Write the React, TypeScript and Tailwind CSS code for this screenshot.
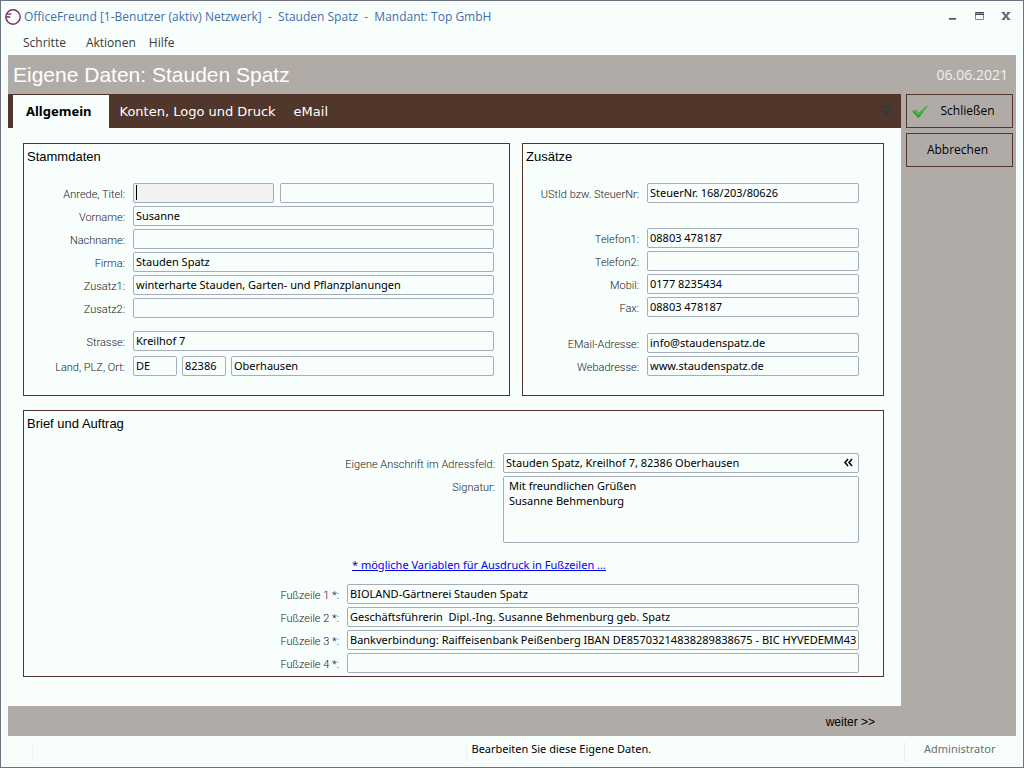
import React, { useId } from 'react';
import clsx from 'clsx';

const inputClass =
  'block h-5 min-w-0 rounded-[2px] border border-[#a6adb9] px-[2px] pb-[2px] text-[11px] leading-4 text-black outline-none';

interface TextInputProps {
  id?: string;
  label?: string;
  value?: string;
  className?: string;
}

function TextInput({ id, label, value = '', className = 'flex-1' }: TextInputProps) {
  return (
    <input
      id={id}
      type="text"
      aria-label={label}
      defaultValue={value}
      className={clsx(inputClass, className)}
    />
  );
}

interface RowProps {
  label: string;
  value?: string;
  labelClass: string;
  className?: string;
  children?: (id: string) => React.ReactNode;
}

function Row({ label, value, labelClass, className, children }: RowProps) {
  const id = useId();

  return (
    <div className={clsx('flex gap-2', className)}>
      <label
        htmlFor={id}
        className={clsx(
          'shrink-0 pt-1 text-right font-[Roboto,"Liberation_Sans",sans-serif] text-[11px] leading-4 font-light whitespace-nowrap text-[#202020]',
          labelClass,
        )}
      >
        {label}
      </label>
      {children ? children(id) : <TextInput id={id} value={value} />}
    </div>
  );
}

interface PanelProps {
  title: string;
  className?: string;
  children: React.ReactNode;
}

function Panel({ title, className, children }: PanelProps) {
  return (
    <section className={clsx('border border-[#51362b]', className)}>
      <h2 className="pt-[3px] pl-[3px] font-['Liberation_Sans',Arial,sans-serif] text-[13px] leading-5 text-black">
        {title}
      </h2>
      {children}
    </section>
  );
}

function TitleBar() {
  return (
    <header className="flex h-[31px] items-center justify-between pr-3 pl-1 font-['Open_Sans','Noto_Sans',sans-serif]">
      <div className="flex items-center gap-[3px]">
        <svg width="16" height="16" viewBox="0 0 16 16" fill="none" stroke="#7d2a6a">
          <circle cx="8" cy="8" r="7.2" strokeWidth="1.4" />
          <path d="M1 5.2h5.4M1 8h4.2M1.5 10.6h0.8" strokeWidth="1.3" />
        </svg>
        <h1 className="text-[12px] leading-4 whitespace-pre text-[#3f6fae]">
          {'OfficeFreund [1-Benutzer (aktiv) Netzwerk]  -  Stauden Spatz  -  Mandant: Top GmbH'}
        </h1>
      </div>
      <div className="flex gap-[17px]">
        <button type="button" aria-label="Minimieren">
          <svg width="10" height="10" viewBox="0 0 10 10">
            <path d="M2 6h7v1H2z" fill="#4a4d5c" />
            <path d="M2 7h7v1H2z" fill="#8a90a8" />
          </svg>
        </button>
        <button type="button" aria-label="Maximieren">
          <svg width="10" height="10" viewBox="0 0 10 10">
            <path d="M1.500 1.500h8v6h-8z" fill="none" stroke="#7d84a0" />
            <path d="M1 0h9v3H1z" fill="#8a90a8" />
            <path d="M1 0h9v1H1zM1 2h9v1H1z" fill="#4a4d5c" />
          </svg>
        </button>
        <button type="button" aria-label="Fenster schließen">
          <svg width="10" height="10" viewBox="0 0 10 10">
            <path d="M2 .5l6 7M8 .5l-6 7" stroke="#666b82" strokeWidth="2" />
            <path d="M.5 .5h3.500M6 .5h3.500M.5 7.500h3.500M6 7.500h3.500" stroke="#666b82" />
          </svg>
        </button>
      </div>
    </header>
  );
}

function Tabs() {
  return (
    <div
      role="tablist"
      className="flex h-[34px] items-stretch bg-[#51362b] pl-[5px] font-['DejaVu_Sans',Verdana,sans-serif] text-[13px] text-white"
    >
      <button
        type="button"
        role="tab"
        aria-selected="true"
        className="mt-px mr-[2px] bg-[#f8fefc] pr-[17px] pl-[13px] font-['Noto_Sans','DejaVu_Sans',sans-serif] font-bold text-black"
      >
        Allgemein
      </button>
      <button type="button" role="tab" aria-selected="false" className="px-[9px] pt-[2px]">
        Konten, Logo und Druck
      </button>
      <button type="button" role="tab" aria-selected="false" className="px-[9px] pt-[2px]">
        eMail
      </button>
      <button type="button" aria-label="Weitere Register" className="mr-[10px] ml-auto">
        <svg width="10" height="10" viewBox="0 0 10 10" fill="#34393f">
          <path d="M0 0h10v2H0zM1 4h8v2L5 10 1 6z" />
        </svg>
      </button>
    </div>
  );
}

function MasterData() {
  const labelClass = 'w-[101px]';

  return (
    <Panel title="Stammdaten" className="pr-[15px] pb-[19px]">
      <div className="mt-4 flex flex-col gap-[3px]">
        <Row label="Anrede, Titel:" labelClass={labelClass}>
          {(id) => (
            <div className="flex min-w-0 flex-1 gap-[6px]">
              <div className="relative w-[141px] shrink-0">
                <TextInput id={id} className="w-full bg-[#f2f2f2]" />
                <span className="absolute top-[2px] left-[3px] h-[15px] w-px bg-black" />
              </div>
              <TextInput label="Titel" />
            </div>
          )}
        </Row>
        <Row label="Vorname:" value="Susanne" labelClass={labelClass} />
        <Row label="Nachname:" labelClass={labelClass} />
        <Row label="Firma:" value="Stauden Spatz" labelClass={labelClass} />
        <Row
          label="Zusatz1:"
          value="winterharte Stauden, Garten- und Pflanzplanungen"
          labelClass={labelClass}
        />
        <Row label="Zusatz2:" labelClass={labelClass} />
      </div>
      <div className="mt-[13px] flex flex-col gap-[5px]">
        <Row label="Strasse:" value="Kreilhof 7" labelClass={labelClass} />
        <Row label="Land, PLZ, Ort:" labelClass={labelClass}>
          {(id) => (
            <div className="flex min-w-0 flex-1 gap-[5px]">
              <TextInput id={id} value="DE" className="w-[44px]" />
              <TextInput label="PLZ" value="82386" className="w-[44px]" />
              <TextInput label="Ort" value="Oberhausen" />
            </div>
          )}
        </Row>
      </div>
    </Panel>
  );
}

function Extras() {
  const labelClass = 'w-[116px]';

  return (
    <Panel title="Zusätze" className="pr-6 pb-[19px]">
      <div className="mt-4">
        <Row
          label="UStId bzw. SteuerNr:"
          value="SteuerNr. 168/203/80626"
          labelClass={labelClass}
        />
      </div>
      <div className="mt-[25px] flex flex-col gap-[3px]">
        <Row label="Telefon1:" value="08803 478187" labelClass={labelClass} />
        <Row label="Telefon2:" labelClass={labelClass} />
        <Row label="Mobil:" value="0177 8235434" labelClass={labelClass} />
        <Row label="Fax:" value="08803 478187" labelClass={labelClass} />
      </div>
      <div className="mt-4 flex flex-col gap-[3px]">
        <Row label="EMail-Adresse:" value="info@staudenspatz.de" labelClass={labelClass} />
        <Row label="Webadresse:" value="www.staudenspatz.de" labelClass={labelClass} />
      </div>
    </Panel>
  );
}

function LetterAndOrder() {
  const footers = [
    'BIOLAND-Gärtnerei Stauden Spatz',
    'Geschäftsführerin  Dipl.-Ing. Susanne Behmenburg geb. Spatz',
    'Bankverbindung: Raiffeisenbank Peißenberg IBAN DE85703214838289838675 - BIC HYVEDEMM438',
    '',
  ];

  return (
    <Panel title="Brief und Auftrag" className="mt-[14px] pr-6 pb-[3px]">
      <div className="mt-[19px] flex flex-col gap-[3px]">
        <Row label="Eigene Anschrift im Adressfeld:" labelClass="w-[471px]">
          {(id) => (
            <div className="relative flex min-w-0 flex-1">
              <TextInput id={id} value="Stauden Spatz, Kreilhof 7, 82386 Oberhausen" />
              <button
                type="button"
                aria-label="Anschrift übernehmen"
                className="absolute top-[5px] right-[6px]"
              >
                <svg width="9" height="9" viewBox="0 0 9 9" fill="none" stroke="#000" strokeWidth="1.5">
                  <path d="M4 1L1 4.500l3 3.500M8 1L5 4.500l3 3.500" />
                </svg>
              </button>
            </div>
          )}
        </Row>
        <Row label="Signatur:" labelClass="w-[471px]">
          {(id) => (
            <textarea
              id={id}
              defaultValue={'Mit freundlichen Grüßen\nSusanne Behmenburg'}
              className="block h-[67px] min-w-0 flex-1 resize-none rounded-[2px] border border-[#a6adb9] bg-transparent px-[5px] pt-px text-[11px] leading-[15px] text-black outline-none"
            />
          )}
        </Row>
      </div>
      <div className="mt-3 mb-[9px] pl-[328px] text-[11px] leading-5">
        <a href="#variablen" className="text-[#0000f0] underline">
          * mögliche Variablen für Ausdruck in Fußzeilen ...
        </a>
      </div>
      <div className="flex flex-col gap-[3px]">
        {footers.map((text, index) => (
          <Row
            key={index}
            label={`Fußzeile ${index + 1} *:`}
            value={text}
            labelClass="w-[315px]"
          />
        ))}
      </div>
    </Panel>
  );
}

function Sidebar() {
  const buttonClass =
    'flex h-[34px] items-center justify-center border border-[#51362b] text-black';

  return (
    <aside className="flex w-[115px] shrink-0 flex-col gap-[5px] pr-[3px] pl-[5px] font-['Open_Sans','Noto_Sans',sans-serif] text-[12px]">
      <button type="button" className={clsx(buttonClass, 'relative pl-4')}>
        <svg
          width="16"
          height="14"
          viewBox="0 0 16 14"
          className="absolute top-[10px] left-[5px]"
        >
          <path
            d="M.5 6.500L4 5l2.200 3.500L15.500.5 6.500 13z"
            fill="#22a722"
            stroke="#3f9a3a"
            strokeWidth=".6"
          />
          <path d="M2 6.600l1.600-.6 2.600 4L12 4" fill="none" stroke="#5fd35a" strokeWidth=".8" />
        </svg>
        Schließen
      </button>
      <button type="button" className={clsx(buttonClass, 'pr-1')}>
        Abbrechen
      </button>
    </aside>
  );
}

export default function App() {
  return (
    <div className="flex min-h-screen flex-col border border-[#6f7280] bg-[#f8fefc] font-['Noto_Sans','Open_Sans',sans-serif]">
      <TitleBar />
      <nav className="flex h-[23px] items-center gap-[13px] pb-px pl-[22px] font-['Open_Sans','Noto_Sans',sans-serif] text-[12px] leading-4 text-[#3a3a3a]">
        <button type="button" className="mr-[7px]">
          Schritte
        </button>
        <button type="button">Aktionen</button>
        <button type="button">Hilfe</button>
      </nav>
      <div className="mx-[7px] flex flex-1 flex-col bg-[#b1aba8]">
        <div className="flex h-[39px] items-center justify-between pr-2 pl-[5px] text-white">
          <h2 className="font-['Liberation_Sans',Arial,sans-serif] text-[21px] leading-6">
            Eigene Daten: Stauden Spatz
          </h2>
          <time
            dateTime="2021-06-06"
            className="font-['Open_Sans','Noto_Sans',sans-serif] text-[14px] text-[#f0f0f0]"
          >
            06.06.2021
          </time>
        </div>
        <div className="flex flex-1">
          <main className="flex min-w-0 flex-1 flex-col bg-[#f8fefc]">
            <Tabs />
            <div className="flex-1 pt-[15px] pr-[17px] pl-[15px]">
              <div className="grid grid-cols-[487fr_362fr] gap-3">
                <MasterData />
                <Extras />
              </div>
              <LetterAndOrder />
            </div>
          </main>
          <Sidebar />
        </div>
        <div className="flex h-[30px] items-center justify-end pr-[141px]">
          <button
            type="button"
            className="pt-px font-['Liberation_Sans',Arial,sans-serif] text-[12px] text-black"
          >
            weiter &gt;&gt;
          </button>
        </div>
      </div>
      <footer className="flex h-[31px] items-center text-[11px] text-black">
        <div className="ml-[31px] h-5 w-px bg-[#f3f0f0]" />
        <div className="flex-1" />
        <div className="h-5 w-px bg-[#f0f2f2]" />
        <p className="flex-1 pb-1 pl-[5px]">Bearbeiten Sie diese Eigene Daten.</p>
        <div className="h-5 w-px bg-[#eeeeee]" />
        <p className="w-[118px] pb-1 pl-[19px] text-[#6f6f6f]">Administrator</p>
      </footer>
    </div>
  );
}
